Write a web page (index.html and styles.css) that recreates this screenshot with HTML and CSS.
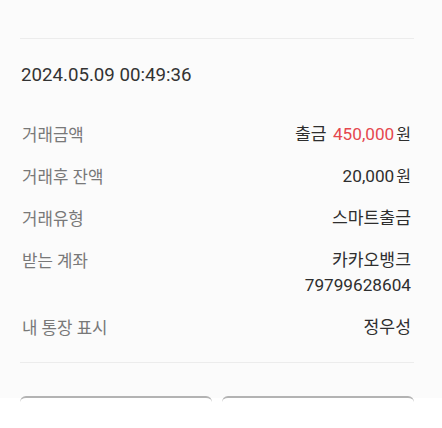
FILE: index.html
```html
<!DOCTYPE html>
<html lang="ko">
<head>
    <meta charset="UTF-8">
    <meta name="viewport" content="width=device-width, initial-scale=1.0">
    <title>거래내역 상세</title>
    <link rel="stylesheet" href="styles.css">
</head>
<body>
    <div class="sheet">
        <div class="divider top"></div>
        <div class="date">2024.05.09 00:49:36</div>
        <div class="rows">
            <div class="row">
                <span class="label">거래금액</span>
                <span class="value">출금 <em class="minus">450,000</em><span class="won">원</span></span>
            </div>
            <div class="row">
                <span class="label">거래후 잔액</span>
                <span class="value">20,000<span class="won">원</span></span>
            </div>
            <div class="row">
                <span class="label">거래유형</span>
                <span class="value">스마트출금</span>
            </div>
            <div class="row">
                <span class="label">받는 계좌</span>
                <span class="value">카카오뱅크<br>79799628604</span>
            </div>
            <div class="row last">
                <span class="label">내 통장 표시</span>
                <span class="value">정우성</span>
            </div>
        </div>
        <div class="divider"></div>
    </div>
    <div class="actions">
        <button type="button" class="btn"></button>
        <button type="button" class="btn"></button>
    </div>
</body>
</html>
```

FILE: styles.css
```css
body {
    margin: 0;
    background: #fff;
    font-family: Roboto, "Noto Sans CJK KR", sans-serif;
    height: 428px;
    overflow: hidden;
}
.sheet {
    box-sizing: border-box;
    height: 398px;
    padding: 38px 28px 0 20px;
    background: #fbfbfb;
}
.divider {
    height: 1px;
    background: #ececec;
    margin-top: 13px;
}
.divider.top {
    margin-top: 0;
}
.date {
    margin-top: 23px;
    padding-left: 1px;
    font-size: 18.7px;
    line-height: 26px;
    color: #333;
}
.rows {
    margin-top: 26px;
}
.row {
    display: flex;
    justify-content: space-between;
    align-items: flex-start;
    padding: 8px 3px 8px 2px;
}
.row.last {
    padding-top: 9px;
}
.label {
    font-size: 16.8px;
    line-height: 26px;
    color: #787878;
}
.value {
    font-size: 17.2px;
    line-height: 25px;
    color: #2e2e2e;
    text-align: right;
}
.minus {
    font-style: normal;
    color: #e5474e;
    margin-left: 2px;
}
.won {
    margin-left: 2px;
    font-size: 16px;
    line-height: 1;
}
.actions {
    display: flex;
    gap: 10px;
    padding: 0 28px 0 20px;
    background: #fff;
}
.btn {
    flex: 1;
    height: 30px;
    margin-top: -2px;
    border: none;
    border-top: 2px solid #b3b3b3;
    border-radius: 6px 6px 0 0;
    background: #fff;
}
```
